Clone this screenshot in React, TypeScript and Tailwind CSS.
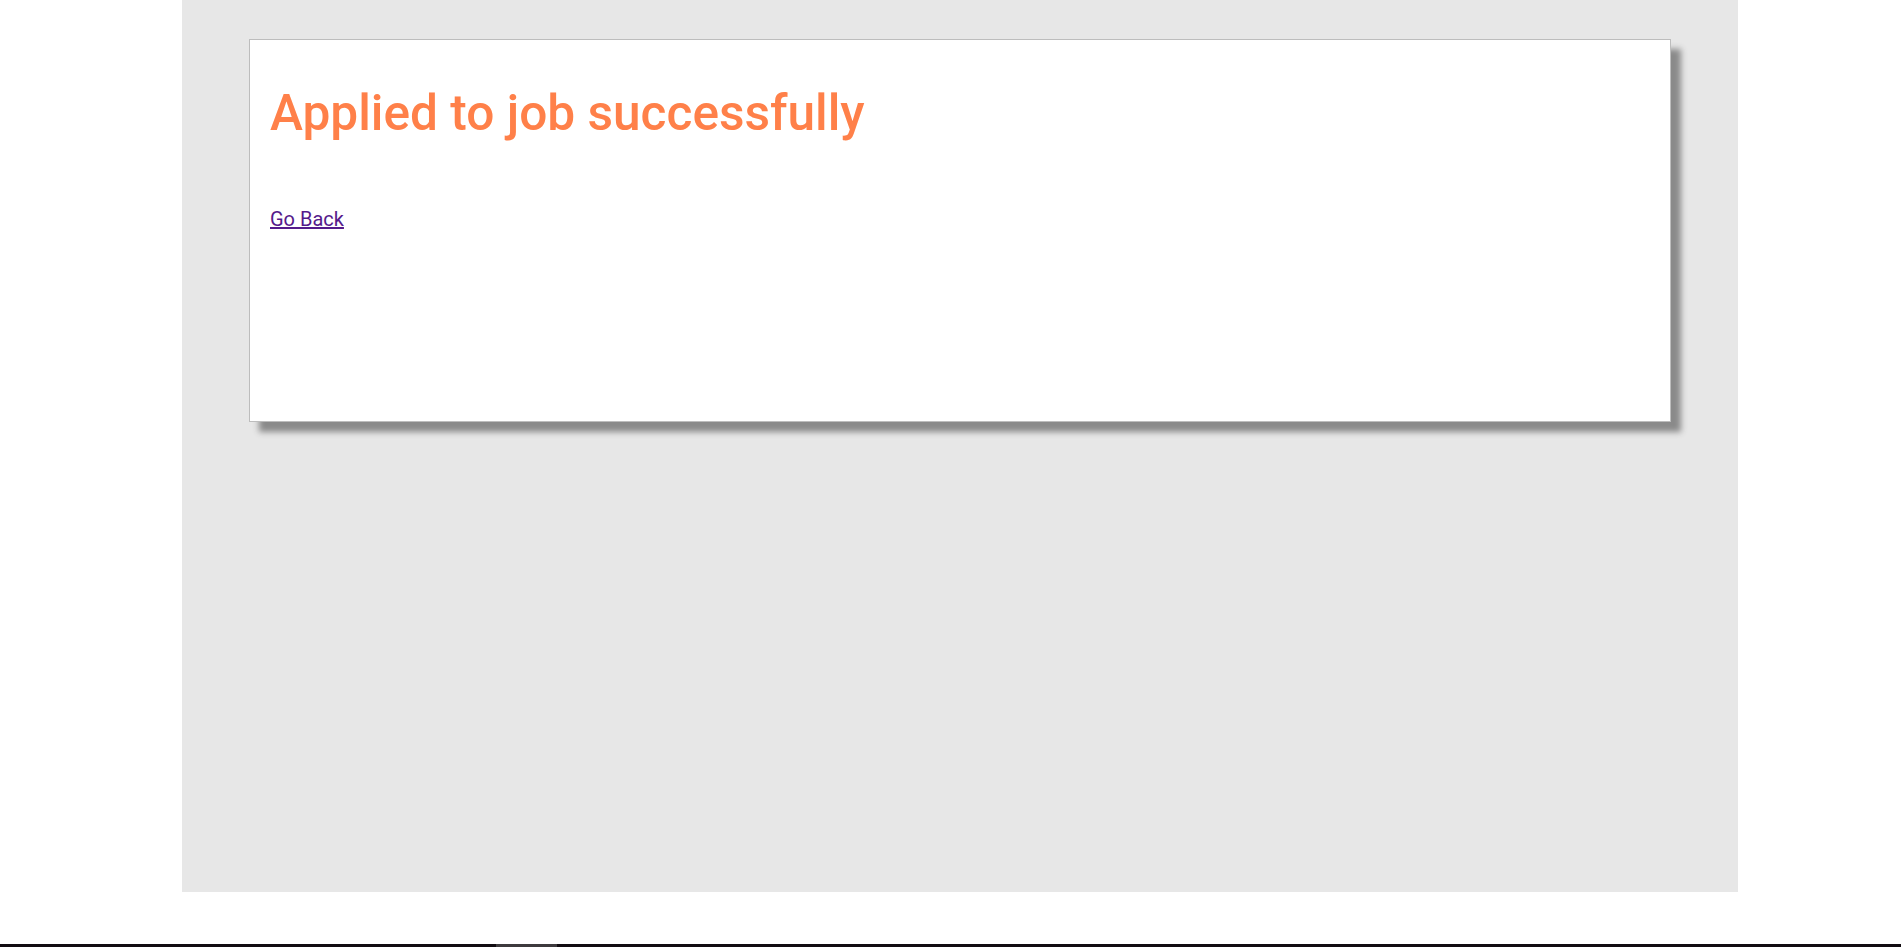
export default function App() {
  return (
    <div className="flex h-[947px] w-full flex-col bg-white font-['Roboto',sans-serif]">
      <div className="flex flex-1">
        <main className="ml-[182px] h-[892px] w-[1556px] bg-[#e7e7e7] px-[67px] pt-[39px]">
          <section className="h-[383px] border border-[#bdbdbd] bg-white px-5 pt-[44px] shadow-[10px_10px_6px_#8a8a8a]">
            <h1 className="text-[49.6px] font-medium leading-[1.2] text-[#ff8049]">
              Applied to job successfully
            </h1>
            <a href="#" className="mt-[60px] inline-block text-[20px] text-[#551a8b] underline">
              Go Back
            </a>
          </section>
        </main>
      </div>
      <div className="flex h-[3px]">
        <div className="w-[496px] bg-[#110c11]" />
        <div className="w-[61px] bg-[#3d3a3d]" />
        <div className="flex-1 bg-[#110c11]" />
      </div>
    </div>
  );
}
